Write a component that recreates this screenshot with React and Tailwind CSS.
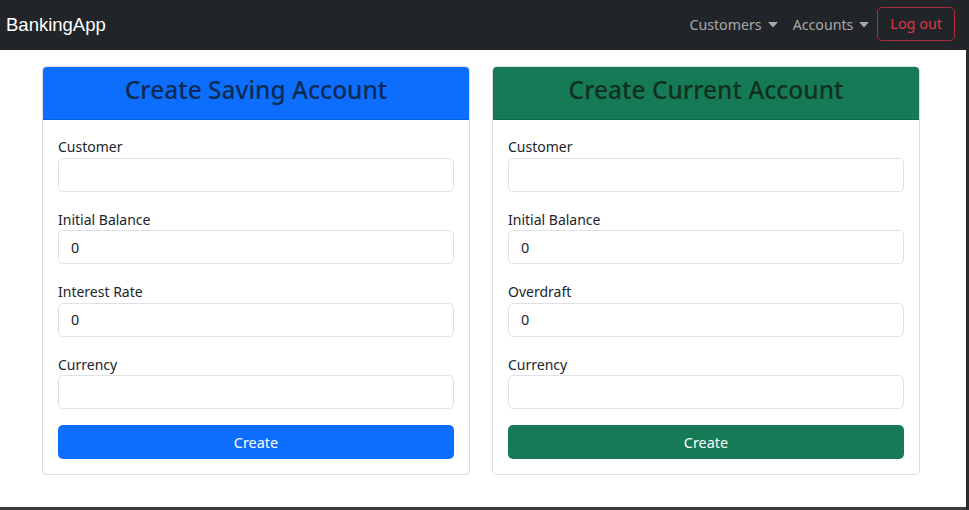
import React from 'react'

const font = { fontFamily: '"Noto Sans", "Open Sans", sans-serif' }

const Field = ({ label, value }) => (
    <div className="flex flex-col mb-[17px]">
        <label className="text-[14px] leading-[21.5px] text-[#212529]">{label}</label>
        <input
            type="text"
            defaultValue={value}
            className="h-[34px] w-full rounded-[5px] border border-[#dee2e6] bg-white px-[12px] text-[14.4px] text-[#212529] focus:outline-none"
        />
    </div>
)

const AccountCard = ({ title, headerClass, titleClass, buttonClass, fields }) => (
    <div className="w-[428px] rounded-[5px] border border-[#dcdcdc] bg-white overflow-hidden">
        <div className={`h-[53px] pb-[5px] flex items-center justify-center border-b border-[#00000020] ${headerClass}`}>
            <h2 className={`text-[24.5px] font-medium leading-none ${titleClass}`}>{title}</h2>
        </div>
        <div className="px-[15px] pt-[16px] pb-[15px]">
            {fields.map((f) => (
                <Field key={f.label} label={f.label} value={f.value} />
            ))}
            <button
                type="button"
                className={`-mt-[1px] h-[34px] w-full rounded-[5px] pt-[2px] text-[14.4px] text-white ${buttonClass}`}
            >
                Create
            </button>
        </div>
    </div>
)

const Caret = () => (
    <svg width="10" height="6" viewBox="0 0 10 6" className="ml-[6px] mt-[1px]">
        <path d="M0 0h10L5 5.5z" fill="currentColor" />
    </svg>
)

const App = () => {
    return (
        <div className="h-[510px] w-[969px] flex flex-col bg-[#2b2b2b] overflow-hidden" style={font}>
            <nav className="h-[50px] flex items-center justify-between bg-[#212529] pl-[6px] pr-[14px] shrink-0">
                <a
                    className="text-[18.5px] text-white"
                    style={{ fontFamily: '"Liberation Sans", Arial, sans-serif' }}
                >
                    BankingApp
                </a>
                <div className="flex items-center text-[14.2px] text-[#a7a9ab]">
                    <span className="flex items-center">Customers<Caret /></span>
                    <span className="flex items-center ml-[15px]">Accounts<Caret /></span>
                    <button className="ml-[8px] mb-[3px] h-[34px] px-[12px] rounded-[5px] border border-[#b02a37] text-[#dc3545] text-[14.4px]">
                        Log out
                    </button>
                </div>
            </nav>
            <div className="flex-1 flex flex-col mr-[3px]">
                <main className="flex-1 bg-white pl-[42px] pt-[16px] flex items-start gap-[22px]">
                    <AccountCard
                        title="Create Saving Account"
                        headerClass="bg-[#0d6efd]"
                        titleClass="text-[#0c2a52]"
                        buttonClass="bg-[#0d6efd]"
                        fields={[
                            { label: 'Customer', value: '' },
                            { label: 'Initial Balance', value: '0' },
                            { label: 'Interest Rate', value: '0' },
                            { label: 'Currency', value: '' },
                        ]}
                    />
                    <AccountCard
                        title="Create Current Account"
                        headerClass="bg-[#157a55]"
                        titleClass="text-[#11301f]"
                        buttonClass="bg-[#157a55]"
                        fields={[
                            { label: 'Customer', value: '' },
                            { label: 'Initial Balance', value: '0' },
                            { label: 'Overdraft', value: '0' },
                            { label: 'Currency', value: '' },
                        ]}
                    />
                </main>
                <div className="h-[3px] bg-[#3a3a3a]" />
            </div>
        </div>
    )
}

export default App
